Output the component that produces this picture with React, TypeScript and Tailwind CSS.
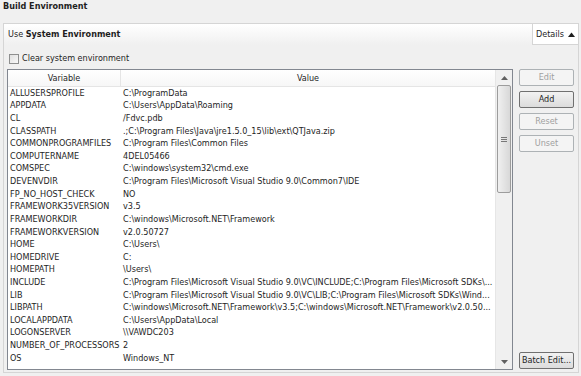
import React from "react";

const rows: [string, string][] = [
  ["ALLUSERSPROFILE", "C:\\ProgramData"],
  ["APPDATA", "C:\\Users\\AppData\\Roaming"],
  ["CL", "/Fdvc.pdb"],
  ["CLASSPATH", ".;C:\\Program Files\\Java\\jre1.5.0_15\\lib\\ext\\QTJava.zip"],
  ["COMMONPROGRAMFILES", "C:\\Program Files\\Common Files"],
  ["COMPUTERNAME", "4DEL05466"],
  ["COMSPEC", "C:\\windows\\system32\\cmd.exe"],
  ["DEVENVDIR", "C:\\Program Files\\Microsoft Visual Studio 9.0\\Common7\\IDE"],
  ["FP_NO_HOST_CHECK", "NO"],
  ["FRAMEWORK35VERSION", "v3.5"],
  ["FRAMEWORKDIR", "C:\\windows\\Microsoft.NET\\Framework"],
  ["FRAMEWORKVERSION", "v2.0.50727"],
  ["HOME", "C:\\Users\\"],
  ["HOMEDRIVE", "C:"],
  ["HOMEPATH", "\\Users\\"],
  ["INCLUDE", "C:\\Program Files\\Microsoft Visual Studio 9.0\\VC\\INCLUDE;C:\\Program Files\\Microsoft SDKs\\..."],
  ["LIB", "C:\\Program Files\\Microsoft Visual Studio 9.0\\VC\\LIB;C:\\Program Files\\Microsoft SDKs\\Wind..."],
  ["LIBPATH", "C:\\windows\\Microsoft.NET\\Framework\\v3.5;C:\\windows\\Microsoft.NET\\Framework\\v2.0.50..."],
  ["LOCALAPPDATA", "C:\\Users\\AppData\\Local"],
  ["LOGONSERVER", "\\\\VAWDC203"],
  ["NUMBER_OF_PROCESSORS", "2"],
  ["OS", "Windows_NT"],
];

function Btn({ label, enabled }: { label: string; enabled?: boolean }) {
  return (
    <div
      className={
        enabled
          ? "h-[17px] w-[55px] border border-[#707070] rounded-[2px] bg-gradient-to-b from-[#f2f2f2] to-[#dcdcdc] flex items-center justify-center text-[#1e1e1e]"
          : "h-[17px] w-[55px] border border-[#adb2b5] rounded-[2px] bg-[#f4f4f4] flex items-center justify-center text-[#a0a0a0]"
      }
    >
      {label}
    </div>
  );
}

export default function App() {
  return (
    <div
      className="w-[581px] h-[376px] bg-[#f0f0f0] text-[9px] leading-[11px] text-[#1e1e1e] flex flex-col overflow-hidden font-stretch-condensed"
      style={{ fontFamily: '"DejaVu Sans Condensed", "DejaVu Sans", sans-serif' }}
    >
      <div className="h-[23px] pl-[3px] pt-[1px] font-bold">Build Environment</div>
      <div className="ml-[3px] mr-[2px] h-[350px] border border-[#d5d5d5] flex flex-col">
        <div className="h-[21px] flex bg-gradient-to-b from-white to-[#f0f0f0]">
          <div className="flex-1 pl-[4px] pt-[5px]">
            Use <span className="font-bold">System Environment</span>
          </div>
          <div className="w-[46px] border-l border-b border-[#d5d5d5] bg-white flex items-center justify-center gap-[4px]">
            <span>Details</span>
            <svg width="7" height="5" viewBox="0 0 7 5">
              <path d="M0 5 L3.5 0.5 L7 5 Z" fill="#1e1e1e" />
            </svg>
          </div>
        </div>
        <div className="h-[23px] flex items-center pl-[5px] gap-[3px] pt-[4px]">
          <div className="w-[10px] h-[10px] border border-[#8e8f8f] bg-gradient-to-br from-[#e0e0e0] to-[#f8f8f8]" />
          <span>Clear system environment</span>
        </div>
        <div className="flex pl-[3px] pt-[1px] gap-[6px]">
          <div className="w-[506px] h-[301px] border border-[#828790] bg-white flex">
            <div className="flex-1 flex flex-col">
              <div className="h-[17px] flex border-b border-[#e5e5e5] bg-gradient-to-b from-white to-[#f7f7f7]">
                <div className="w-[113px] border-r border-[#e5e5e5] flex items-center justify-center">Variable</div>
                <div className="flex-1 flex items-center justify-center">Value</div>
              </div>
              <div className="flex flex-col pt-[0px]">
                {rows.map(([k, v]) => (
                  <div key={k} className="h-[12.62px] flex items-center whitespace-nowrap">
                    <div className="w-[113px] pl-[2px]">{k}</div>
                    <div className="flex-1 pl-[2px] overflow-hidden">{v}</div>
                  </div>
                ))}
              </div>
            </div>
            <div className="w-[17px] bg-[#f0f0f0] border-l border-[#e6e6e6] flex flex-col items-center">
              <div className="h-[15px] flex items-center justify-center">
                <svg width="7" height="4" viewBox="0 0 7 4">
                  <path d="M0 4 L3.5 0 L7 4 Z" fill="#606060" />
                </svg>
              </div>
              <div className="w-[14px] h-[108px] border border-[#9c9c9c] rounded-[2px] bg-gradient-to-r from-[#f0f0f0] to-[#d8d8d8] flex flex-col items-center justify-center gap-[1px]">
                <div className="w-[6px] h-[1px] bg-[#777]" />
                <div className="w-[6px] h-[1px] bg-[#777]" />
                <div className="w-[6px] h-[1px] bg-[#777]" />
              </div>
              <div className="flex-1" />
              <div className="h-[15px] flex items-center justify-center">
                <svg width="7" height="4" viewBox="0 0 7 4">
                  <path d="M0 0 L3.5 4 L7 0 Z" fill="#606060" />
                </svg>
              </div>
            </div>
          </div>
          <div className="flex flex-col w-[55px]">
            <div className="flex flex-col gap-[5px]">
              <Btn label="Edit" />
              <Btn label="Add" enabled />
              <Btn label="Reset" />
              <Btn label="Unset" />
            </div>
            <div className="flex-1" />
            <div className="pb-[1px]">
              <Btn label="Batch Edit..." enabled />
            </div>
          </div>
        </div>
      </div>
    </div>
  );
}
